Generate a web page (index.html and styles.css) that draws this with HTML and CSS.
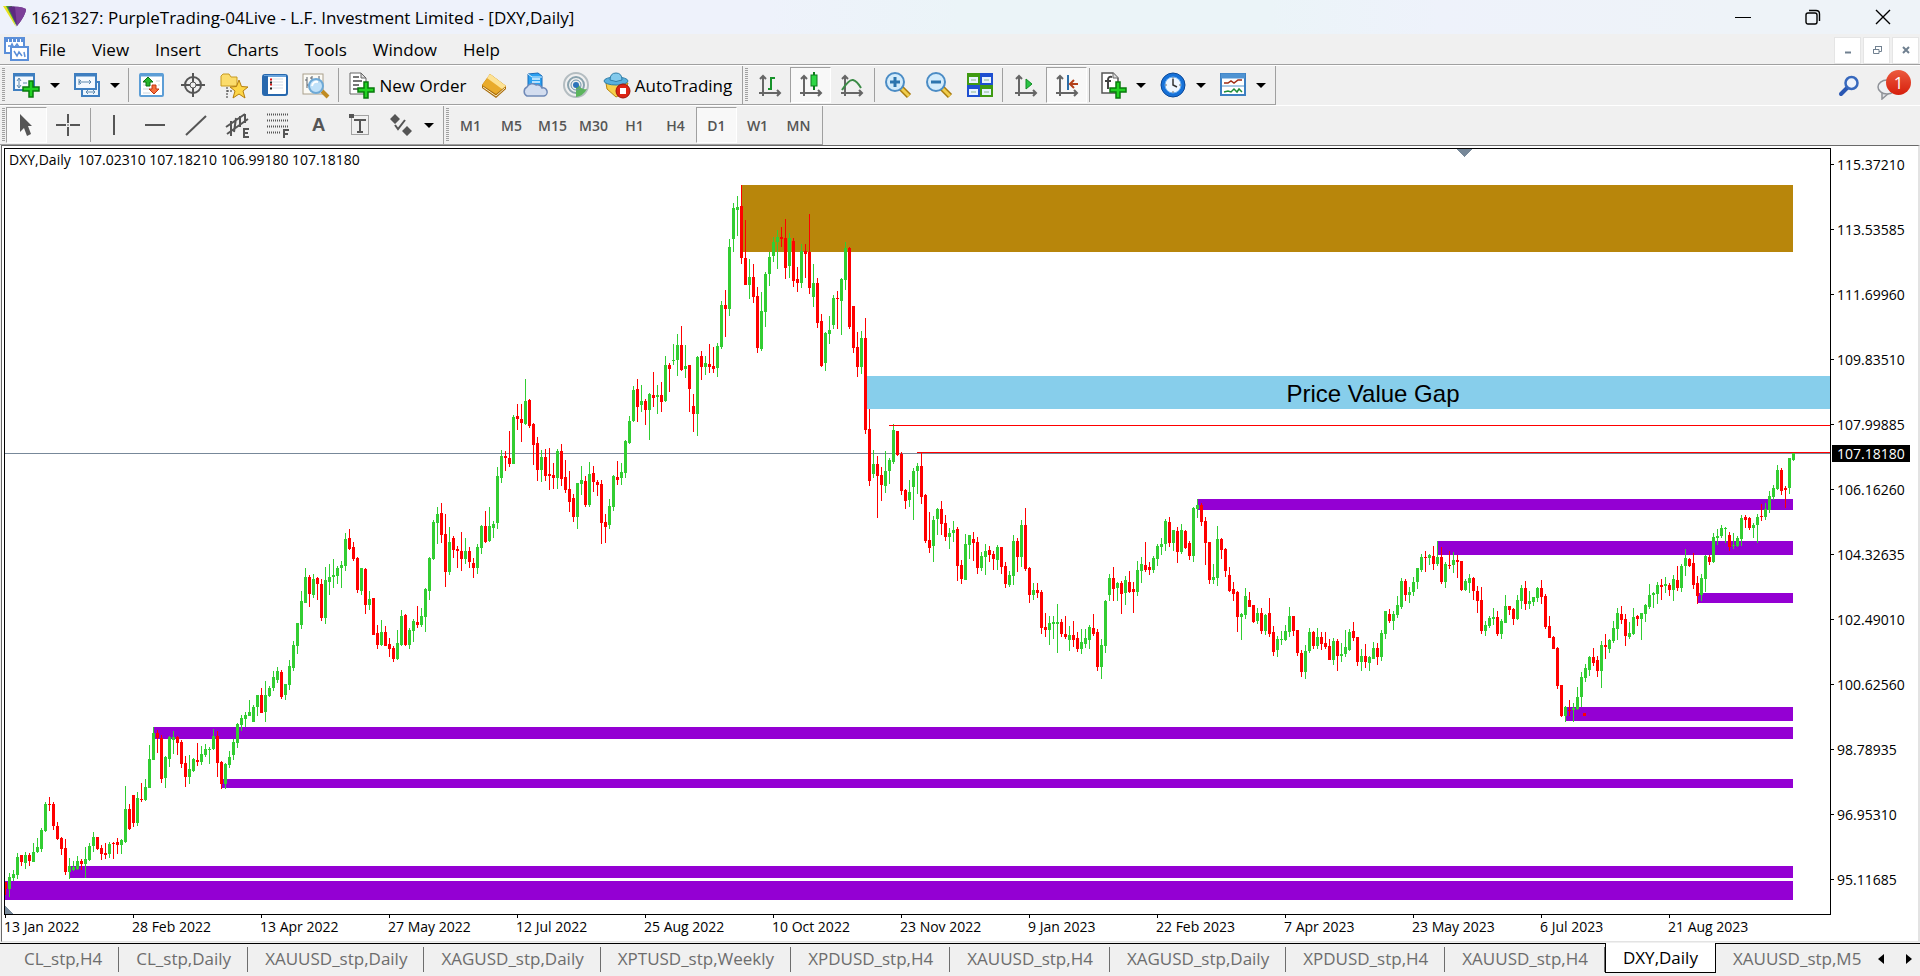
FILE: index.html
```
<!DOCTYPE html>
<html lang="en">
<head>
  <meta charset="utf-8">
  <title>1621327: PurpleTrading-04Live - L.F. Investment Limited - [DXY,Daily]</title>
  <link rel="stylesheet" href="styles.css">
</head>
<body>
  <header class="titlebar">
    <svg class="logo" width="24" height="22" viewBox="0 0 24 22">
      <path d="M0 0 6 0 13 21Z" fill="#e9e21c"/>
      <path d="M3 0H9L14 21Z" fill="#3f9b3d"/>
      <path d="M5 1Q12-1 23 3Q23 9 14 20Z" fill="#5d2a80"/>
      <path d="M12 1Q18 0 23 3Q23 9 14 20Z" fill="#7c3f98"/>
    </svg>
    <h1>1621327: PurpleTrading-04Live - L.F. Investment Limited - [DXY,Daily]</h1>
    <div class="window-buttons">
      <button aria-label="Minimize"><svg width="16" height="16"><path d="M0 8.5H16" stroke="#000"/></svg></button>
      <button aria-label="Restore"><svg width="16" height="16" fill="none" stroke="#000" stroke-width="1.4"><rect x="1" y="4" width="11" height="11" rx="2"/><path d="M4 1.500H11Q14.500 1.500 14.500 5V12"/></svg></button>
      <button aria-label="Close"><svg width="16" height="16"><path d="M1 1 15 15M15 1 1 15" stroke="#000" stroke-width="1.4"/></svg></button>
    </div>
  </header>

  <nav class="menubar">
    <svg class="doc-icon" width="26" height="26" viewBox="0 0 26 26">
      <path d="M1 2H20V17H1Z" fill="#fff" stroke="#5b8fd9" stroke-width="2"/>
      <path d="M1 4H20" stroke="#5b8fd9" stroke-width="4" stroke-dasharray="3 1"/>
      <path d="M4 10H7L8 8 10 12 13 8 15 11" fill="none" stroke="#5b8fd9" stroke-width="1.500"/>
      <path d="M7 11H24V24H7Z" fill="#fff" stroke="#5b8fd9" stroke-width="2"/>
      <path d="M10 15 13 20 15 16 18 20M20 16 21 21" fill="none" stroke="#5b8fd9" stroke-width="1.500"/>
    </svg>
    <button>File</button>
    <button>View</button>
    <button>Insert</button>
    <button>Charts</button>
    <button>Tools</button>
    <button>Window</button>
    <button>Help</button>
    <div class="mdi-buttons">
      <button aria-label="Minimize chart"><svg width="12" height="12"><path d="M3 8.500H9" stroke="#708090" stroke-width="2"/></svg></button>
      <button aria-label="Restore chart"><svg width="12" height="12" fill="none" stroke="#708090"><path d="M4.500 5V2.500H10.500V7.500H8M4 2.500H11" /><path d="M2 5.500H8V9.500H2.500V5"/></svg></button>
      <button aria-label="Close chart"><svg width="12" height="12"><path d="M3 3 9 9M9 3 3 9" stroke="#708090" stroke-width="2"/></svg></button>
    </div>
  </nav>

  <div class="toolbar">
    <div class="bar">
      <i class="grip"></i>
      <button class="tool drop" aria-label="New chart">
        <svg viewBox="0 0 28 28"><rect x="1" y="3" width="20" height="16" fill="#f4f9fe" stroke="#3f7fc0" stroke-width="2"/><path d="M1 4H21" stroke="#3f7fc0" stroke-width="3"/><path d="M6 8V16M4 10 6 7 8 10M4 14 6 17 8 14M10 12H14" stroke="#5d88ad" fill="none"/><path d="M16 10H20V16H26V20H20V26H16V20H10V16H16Z" fill="#22d322" stroke="#087a0d" stroke-width="1.500"/></svg>
      </button>
      <button class="tool drop" aria-label="Profiles">
        <svg viewBox="0 0 28 28"><rect x="9" y="11" width="17" height="14" fill="#eef6fd" stroke="#3f7fc0" stroke-width="2"/><path d="M13 21H22M15 19 13 21 15 23M20 19 22 21 20 23" stroke="#5d88ad" fill="none"/><rect x="2" y="3" width="21" height="15" fill="#f4f9fe" stroke="#3f7fc0" stroke-width="2"/><path d="M1 4H24" stroke="#3f7fc0" stroke-width="3"/><path d="M6 8V14M6 11H18M8 9 6 11 8 13M16 9 18 11 16 13" stroke="#5d88ad" fill="none"/></svg>
      </button>
      <i class="sep"></i>
      <button class="tool" aria-label="Market Watch">
        <svg viewBox="0 0 28 28"><rect x="2" y="3" width="23" height="22" rx="1" fill="#fff" stroke="#5d9ed6" stroke-width="2"/><path d="M2 4H25" stroke="#5d9ed6" stroke-width="3"/><path d="M5 10H8M5 14H8M5 18H12M18 10H22M20 14H22M5 22H12" stroke="#c9d5df"/><path d="M10 6 15 11H12V15H8V11H5Z" fill="#25b52b" stroke="#0b7010"/><path d="M16 23 11 18H14V14H18V18H21Z" fill="#f4703c" stroke="#c33410"/></svg>
      </button>
      <button class="tool" aria-label="Data Window">
        <svg viewBox="0 0 28 28" fill="none" stroke="#555"><circle cx="14" cy="14" r="8" stroke-width="2"/><circle cx="14" cy="14" r="3"/><path d="M14 2V11M14 17V26M2 14H11M17 14H26" stroke-width="2"/></svg>
      </button>
      <button class="tool" aria-label="Navigator">
        <svg viewBox="0 0 28 28"><path d="M1 15V5L3 3H9L11 6H17V15Z" fill="#fbdc6c" stroke="#c79a21"/><path d="M7 16V27M7 20H13" stroke="#333" stroke-dasharray="2 1"/><path d="M19 9 21.500 15.500 28 16 23 20 25 27 19 23 13 27 15 20 10 16 16.500 15.500Z" fill="#fdd648" stroke="#b57d0c"/></svg>
      </button>
      <button class="tool" aria-label="Terminal">
        <svg viewBox="0 0 28 28"><rect x="2" y="4" width="24" height="20" rx="2" fill="#fff" stroke="#2768ae" stroke-width="2"/><path d="M3 5H25" stroke="#6ba5dd" stroke-width="2"/><path d="M5 5V23" stroke="#2768ae" stroke-width="4"/><path d="M10 8H22M10 11H22M10 14H22M10 17H22" stroke="#d5dde6"/><path d="M9 8.500H11M9 13.500H11" stroke="#e01515" stroke-width="2"/><path d="M9 11.500H11M9 17.500H11" stroke="#222" stroke-width="2"/></svg>
      </button>
      <button class="tool" aria-label="Strategy Tester">
        <svg viewBox="0 0 28 28"><rect x="1" y="3" width="20" height="20" fill="#fbfaf5" stroke="#aaa08b"/><path d="M5 6V17M3 9H5M5 14H7M10 5V10M8 7H10M17 5V12M15 9H17" stroke="#58606a"/><path d="M20 20 26 26" stroke="#c08b22" stroke-width="4"/><circle cx="14" cy="15" r="7" fill="#b9defa" fill-opacity=".9" stroke="#6ea9d6" stroke-width="2"/><path d="M10 15Q11 10 16 11" stroke="#fff" fill="none" stroke-width="2"/></svg>
      </button>
      <i class="sep"></i>
      <button class="tool labelled" aria-label="New Order">
        <svg viewBox="0 0 28 28"><path d="M3 2H14L19 7V23H3Z" fill="#fff" stroke="#666"/><path d="M14 2V7H19Z" fill="#ddd" stroke="#666"/><path d="M6 6H12M6 10H15M6 14H12M6 18H11" stroke="#777" stroke-width="2"/><path d="M17 11H21V17H27V21H21V27H17V21H11V17H17Z" fill="#22d322" stroke="#087a0d" stroke-width="1.500"/></svg>
        <span>New Order</span>
      </button>
      <button class="tool" aria-label="MetaEditor">
        <svg viewBox="0 0 28 28"><path d="M10 3 26 15V18L16 27 2 17V14Z" fill="#a96c0b"/><path d="M10 3 26 15 16 23 2 14Z" fill="#e9ab2c"/><path d="M10 3 26 15 22 18 7 7Z" fill="#fde294"/><path d="M3 16 16 25 25 17" fill="none" stroke="#fbeec6"/></svg>
      </button>
      <button class="tool" aria-label="VPS">
        <svg viewBox="0 0 28 28"><path d="M7 3 17 2 21 5V16H7Z" fill="#2ba0f0" stroke="#1b6ab8"/><path d="M7 3 11 6H21" stroke="#d8f0ff" fill="none"/><path d="M11 8H19M11 11H19" stroke="#e5f5ff" stroke-width="1.500"/><path d="M6 25A5 5 0 0 1 6 16 6 6 0 0 1 15 14 5 5 0 0 1 21 17 4 4 0 0 1 23 25Z" fill="#d3ddef" stroke="#6f89b7" stroke-width="1.500"/></svg>
      </button>
      <button class="tool" aria-label="Signals">
        <svg viewBox="0 0 28 28" fill="none"><circle cx="14" cy="14" r="12" stroke="#b4bdc1" stroke-width="2"/><circle cx="14" cy="14" r="8" stroke="#8aa3ae" stroke-width="2"/><path d="M14 14V26Q21 25 25 18Q19 19 17 14Z" fill="#5cb45d"/><circle cx="14" cy="14" r="5" stroke="#6e93a8"/><circle cx="14" cy="14" r="3" fill="#2d73b9"/></svg>
      </button>
      <button class="tool labelled auto" aria-label="AutoTrading">
        <svg viewBox="0 0 28 28"><path d="M3 12H25L21 22 13 26 4 18Z" fill="#f6cf4a" stroke="#b68413"/><ellipse cx="13" cy="10" rx="12" ry="4" fill="#59b0dd" stroke="#2e7da8"/><path d="M7 9Q7 2 13 2T19 9Q13 12 7 9" fill="#83caec" stroke="#2e7da8"/><circle cx="20" cy="20" r="7" fill="#dc2414" stroke="#9d140a"/><rect x="17" y="17" width="6" height="6" fill="#fff"/></svg>
        <span>AutoTrading</span>
      </button>
    </div>
    <div class="bar">
      <i class="grip"></i>
      <button class="tool" aria-label="Bar Chart">
        <svg viewBox="0 0 28 28" fill="none" stroke="#666" stroke-width="2"><path d="M7 5V25M3 22H24M4 8 7 5 10 8M21 19 24 22 21 25"/><path d="M12 18H15V7H19" stroke="#16922a"/></svg>
      </button>
      <button class="tool pressed" aria-label="Candlesticks">
        <svg viewBox="0 0 28 28" fill="none" stroke="#666" stroke-width="2"><path d="M7 5V25M3 22H24M4 8 7 5 10 8M21 19 24 22 21 25"/><path d="M17 1V19" stroke="#0d7a1c"/><rect x="14" y="4" width="6" height="11" fill="#2fd645" stroke="#0d7a1c" stroke-width="1"/></svg>
      </button>
      <button class="tool" aria-label="Line Chart">
        <svg viewBox="0 0 28 28" fill="none" stroke="#666" stroke-width="2"><path d="M7 5V25M3 22H24M4 8 7 5 10 8M21 19 24 22 21 25"/><path d="M4 19Q11 8 15 9T23 17" stroke="#3b8b46"/></svg>
      </button>
      <i class="sep"></i>
      <button class="tool" aria-label="Zoom In">
        <svg viewBox="0 0 28 28"><path d="M17 17 25 25" stroke="#a97b0d" stroke-width="6"/><path d="M17 17 25 25" stroke="#f1cd4d" stroke-width="3"/><circle cx="11" cy="11" r="9" fill="#d4ecfb" stroke="#4b8cc5" stroke-width="2"/><path d="M6 11H16M11 6V16" stroke="#2d75ae" stroke-width="3"/></svg>
      </button>
      <button class="tool" aria-label="Zoom Out">
        <svg viewBox="0 0 28 28"><path d="M17 17 25 25" stroke="#a97b0d" stroke-width="6"/><path d="M17 17 25 25" stroke="#f1cd4d" stroke-width="3"/><circle cx="11" cy="11" r="9" fill="#d4ecfb" stroke="#4b8cc5" stroke-width="2"/><path d="M6 11H16" stroke="#2d75ae" stroke-width="3"/></svg>
      </button>
      <button class="tool" aria-label="Tile Windows">
        <svg viewBox="0 0 28 28"><path d="M1 2H14V14H1ZM14 14H27V26H14Z" fill="#3f9a12"/><path d="M14 2H27V14H14ZM1 14H14V26H1Z" fill="#1e4fd0"/><path d="M3 6H12V12H3ZM16 6H25V12H16ZM3 18H12V24H3ZM16 18H25V24H16Z" fill="#e8f3ff"/><path d="M5 9H10M18 9H23M5 21H10M18 21H23" stroke="#8fb48c"/></svg>
      </button>
      <i class="sep"></i>
      <button class="tool" aria-label="Auto Scroll">
        <svg viewBox="0 0 28 28" fill="none" stroke="#666" stroke-width="2"><path d="M7 5V25M3 22H24M4 8 7 5 10 8M21 19 24 22 21 25"/><path d="M14 8 20 13 14 18Z" fill="#29c444" stroke="#128a25" stroke-width="1"/></svg>
      </button>
      <button class="tool pressed" aria-label="Chart Shift">
        <svg viewBox="0 0 28 28" fill="none" stroke="#666" stroke-width="2"><path d="M7 5V25M3 22H24M4 8 7 5 10 8M21 19 24 22 21 25"/><path d="M15 4V19" stroke="#2c6ea8"/><path d="M25 13H18M21 9 17 13 21 17" stroke="#b3401a"/></svg>
      </button>
      <i class="sep"></i>
      <button class="tool drop" aria-label="Indicators">
        <svg viewBox="0 0 28 28"><path d="M3 2H14L19 7V22H3Z" fill="#fff" stroke="#555" stroke-width="1.500"/><path d="M14 2V7H19" fill="#ddd" stroke="#666"/><path d="M13 6Q9 5 9 9V18M6 10H12" stroke="#444" stroke-width="2" fill="none"/><path d="M17 11H21V17H27V21H21V27H17V21H11V17H17Z" fill="#22d322" stroke="#087a0d" stroke-width="1.500"/></svg>
      </button>
      <button class="tool drop" aria-label="Periods">
        <svg viewBox="0 0 28 28"><circle cx="14" cy="14" r="12" fill="#1671d8" stroke="#0b4796"/><circle cx="14" cy="14" r="8" fill="#eef6ff" stroke="#6bb0f2"/><path d="M14 8V14L18 16" stroke="#333" stroke-width="1.500" fill="none"/><path d="M14 6V8M14 20V22M6 14H8M20 14H22" stroke="#777"/></svg>
      </button>
      <button class="tool drop" aria-label="Templates">
        <svg viewBox="0 0 28 28"><rect x="2" y="3" width="24" height="21" fill="#fff" stroke="#3c7fc2" stroke-width="2"/><path d="M2 5H26" stroke="#4f93d2" stroke-width="5"/><path d="M3 15H25" stroke="#8fb9de" stroke-width="1.500"/><path d="M5 12H9L12 10 15 12 19 9H23" fill="none" stroke="#a02c15" stroke-width="1.500"/><path d="M5 21 9 20 12 21 15 18 18 21 20 18 23 21" fill="none" stroke="#1f8d38" stroke-width="1.500"/></svg>
      </button>
    </div>
    <div class="bar-right">
      <button aria-label="Search"><svg width="24" height="24" viewBox="0 0 24 24" fill="none"><path d="M10 14 4 20" stroke="#2a57b3" stroke-width="4" stroke-linecap="round"/><circle cx="14.500" cy="9" r="6" fill="#eef3fb" stroke="#3768bd" stroke-width="2.500"/></svg></button>
      <button class="notify" aria-label="Notifications"><svg width="28" height="28" viewBox="0 0 28 28"><path d="M7 20 7 27 14 21" fill="#e3e5e9" stroke="#8f9298" stroke-width="1.500"/><ellipse cx="12" cy="15" rx="9" ry="7" fill="#eef0f3" stroke="#8f9298" stroke-width="1.500"/></svg><span class="badge">1</span></button>
    </div>
  </div>

  <div class="toolbar">
    <div class="bar">
      <i class="grip"></i>
      <button class="tool pressed" aria-label="Cursor">
        <svg viewBox="0 0 28 28"><path d="M7 3V21L11 17 14 25 18 23 15 15H19Z" fill="#555"/></svg>
      </button>
      <button class="tool" aria-label="Crosshair">
        <svg viewBox="0 0 28 28" stroke="#555" stroke-width="2"><path d="M14 3V12M14 16V25M2 14H12M16 14H26M13.500 14H14.500"/></svg>
      </button>
      <i class="sep"></i>
      <button class="tool" aria-label="Vertical Line"><svg viewBox="0 0 28 28" stroke="#555" stroke-width="2"><path d="M14 4V24"/></svg></button>
      <button class="tool" aria-label="Horizontal Line"><svg viewBox="0 0 28 28" stroke="#555" stroke-width="2"><path d="M4 14H24"/></svg></button>
      <button class="tool" aria-label="Trendline"><svg viewBox="0 0 28 28" stroke="#555" stroke-width="2"><path d="M4 24 24 5"/></svg></button>
      <button class="tool" aria-label="Equidistant Channel">
        <svg viewBox="0 0 28 28" stroke="#555" stroke-width="2" fill="none"><path d="M3 16 22 3M4 23 25 8M8 10V25M13 7 11 21M17 5V16M22 3V12"/><path d="M26 18H21V26H26M21 22H25"/></svg>
      </button>
      <button class="tool" aria-label="Fibonacci Retracement">
        <svg viewBox="0 0 28 28" stroke="#555" stroke-width="2" fill="none"><path d="M3 3.500H24M3 9.500H24M3 15.500H24M3 21.500H17" stroke-dasharray="1 1"/><path d="M20 27V19H25M20 23H24"/></svg>
      </button>
      <button class="tool glyph" aria-label="Text">A</button>
      <button class="tool" aria-label="Text Label">
        <svg viewBox="0 0 28 28" stroke="#555" stroke-width="2" fill="none"><path d="M5.500 4.500H22.500V23.500H5.500Z" stroke-dasharray="1 1" stroke-width="1"/><path d="M9 10V9H19V10M14 9V21M11 21H17"/><path d="M4 4H7V6H4Z"/></svg>
      </button>
      <button class="tool drop" aria-label="Arrows">
        <svg viewBox="0 0 28 28" fill="#555"><path d="M8 3 13 8 8 13 3 8ZM20 15 25 20 20 25 15 20Z"/><path d="M8 14 11 18 18 9" fill="none" stroke="#555" stroke-width="2"/></svg>
      </button>
    </div>
    <div class="bar">
      <i class="grip"></i>
      <button class="tool">M1</button>
      <button class="tool">M5</button>
      <button class="tool">M15</button>
      <button class="tool">M30</button>
      <button class="tool">H1</button>
      <button class="tool">H4</button>
      <button class="tool pressed">D1</button>
      <button class="tool">W1</button>
      <button class="tool">MN</button>
    </div>
  </div>

  <main class="workspace">
    <div class="plot">
      <svg id="chart" shape-rendering="crispEdges" role="img" aria-label="DXY daily candles"></svg>
      <p class="quote">DXY,Daily&nbsp; 107.02310 107.18210 106.99180 107.18180</p>
    </div>
    <div class="price-axis">
      <ul>
        <li>115.37210</li>
        <li>113.53585</li>
        <li>111.69960</li>
        <li>109.83510</li>
        <li>107.99885</li>
        <li>106.16260</li>
        <li>104.32635</li>
        <li>102.49010</li>
        <li>100.62560</li>
        <li>98.78935</li>
        <li>96.95310</li>
        <li>95.11685</li>
      </ul>
      <span class="last-price">107.18180</span>
    </div>
    <ul class="time-axis">
      <li>13 Jan 2022</li>
      <li>28 Feb 2022</li>
      <li>13 Apr 2022</li>
      <li>27 May 2022</li>
      <li>12 Jul 2022</li>
      <li>25 Aug 2022</li>
      <li>10 Oct 2022</li>
      <li>23 Nov 2022</li>
      <li>9 Jan 2023</li>
      <li>22 Feb 2023</li>
      <li>7 Apr 2023</li>
      <li>23 May 2023</li>
      <li>6 Jul 2023</li>
      <li>21 Aug 2023</li>
    </ul>
  </main>

  <footer class="tabs">
    <button>CL_stp,H4</button>
    <button>CL_stp,Daily</button>
    <button>XAUUSD_stp,Daily</button>
    <button>XAGUSD_stp,Daily</button>
    <button>XPTUSD_stp,Weekly</button>
    <button>XPDUSD_stp,H4</button>
    <button>XAUUSD_stp,H4</button>
    <button>XAGUSD_stp,Daily</button>
    <button>XPDUSD_stp,H4</button>
    <button>XAUUSD_stp,H4</button>
    <button class="active">DXY,Daily</button>
    <button class="last">XAUUSD_stp,M5</button>
    <div class="scroll">
      <button aria-label="Scroll left"><svg width="6" height="10"><path d="M6 0V10L0 5Z"/></svg></button>
      <button aria-label="Scroll right"><svg width="6" height="10"><path d="M0 0V10L6 5Z"/></svg></button>
    </div>
  </footer>
  <script src="chart.js"></script>
</body>
</html>
```
FILE: styles.css
```
* {
  box-sizing: border-box;
}

body {
  margin: 0;
  min-height: 100vh;
  display: flex;
  flex-direction: column;
  background: #f0f0f0;
  color: #000;
  font: 17px "Open Sans", "Noto Sans", sans-serif;
}

button {
  margin: 0;
  padding: 0;
  border: 0;
  background: none;
  color: inherit;
  font: inherit;
}

svg {
  display: block;
}

ul {
  list-style: none;
  margin: 0;
  padding: 0;
}

/* title bar and menu */

.titlebar {
  display: flex;
  align-items: center;
  height: 34px;
  background: linear-gradient(90deg, #eef2fb, #eef2fb 40%, #ebf4f8 50%, #ebf4f8 66%, #eef2fb 75%, #eef3f8 90%);
}

.logo {
  margin: 0 4px 0 3px;
}

.titlebar h1 {
  margin: 0;
  font-size: 17px;
  font-weight: 400;
}

.window-buttons {
  display: flex;
  margin: 0 2px 0 auto;
}

.window-buttons button {
  display: flex;
  align-items: center;
  justify-content: center;
  width: 70px;
  height: 34px;
}

.menubar {
  display: flex;
  align-items: center;
  height: 31px;
  padding-left: 4px;
  border-bottom: 1px solid #a0a0a0;
}

.menubar > button {
  padding: 0 13px;
}

.doc-icon {
  margin-right: -4px;
}

.mdi-buttons {
  display: flex;
  gap: 2px;
  margin: 2px 1px 0 auto;
}

.mdi-buttons button {
  display: flex;
  align-items: center;
  justify-content: center;
  width: 27px;
  height: 27px;
  background: #fff;
  border: 1px solid #e5e5e5;
}

/* toolbars */

.toolbar {
  display: flex;
  height: 40px;
  border-top: 1px solid #fff;
}

.bar {
  display: flex;
  align-items: center;
  padding: 0 3px 0 2px;
  border-right: 1px solid #a0a0a0;
  border-bottom: 1px solid #a0a0a0;
}

.grip {
  width: 3px;
  height: 34px;
  margin-right: 1px;
  background: repeating-linear-gradient(#a0a0a0 0 1px, #f0f0f0 1px 2px);
}

.sep {
  width: 1px;
  height: 34px;
  margin: 0 2px;
  background: #a0a0a0;
}

.tool {
  display: flex;
  align-items: center;
  justify-content: center;
  width: 41px;
  height: 36px;
  color: #555;
  font-size: 14px;
  font-weight: 600;
}

.tool svg {
  flex: none;
  width: 28px;
  height: 28px;
}

.tool.glyph {
  font: 700 19px "Liberation Sans", sans-serif;
}

.drop {
  width: 60px;
  gap: 9px;
}

.drop::after {
  content: "";
  border: 5px solid transparent;
  border-top-color: #000;
  border-bottom-width: 0;
}

.labelled {
  width: 132px;
  gap: 4px;
  color: #000;
  font-size: 17px;
  font-weight: 400;
}

.auto {
  width: 143px;
}

.pressed {
  border: 1px solid #a0a0a0;
  border-right-color: #fff;
  border-bottom-color: #fff;
  background: #f8f8f8;
}

.bar-right {
  display: flex;
  align-items: center;
  gap: 14px;
  margin: 0 9px 0 auto;
}

.notify {
  position: relative;
  width: 36px;
}

.badge {
  position: absolute;
  top: -2px;
  right: 0;
  width: 25px;
  height: 25px;
  border-radius: 50%;
  background: linear-gradient(#ec5a3e, #d61f0c);
  color: #fff;
  font-size: 17px;
  line-height: 25px;
}

/* chart */

.workspace {
  flex: 1;
  display: grid;
  grid-template-columns: 1fr 87px;
  grid-template-rows: 1fr 26px;
  margin-left: 1px;
  padding: 2px 0 0 2px;
  border: 1px solid #696969;
  border-right: 2px solid #e3e3e3;
  border-bottom-color: #e3e3e3;
  background: #fff;
  font-size: 14px;
}

.plot {
  position: relative;
  border: 1px solid #000;
}

#chart {
  position: absolute;
  width: 100%;
  height: 100%;
}

#chart text {
  font: 24px "Liberation Sans", sans-serif;
}

.quote {
  position: absolute;
  top: 1px;
  left: 4px;
  margin: 0;
}

.price-axis {
  position: relative;
}

.price-axis li {
  display: flex;
  height: 65px;
  line-height: 34px;
}

.price-axis li:last-child {
  height: 34px;
}

.price-axis li::before {
  content: "";
  width: 3px;
  height: 1px;
  margin: 16px 3px 0 0;
  background: #000;
}

.last-price {
  position: absolute;
  top: 297px;
  left: 1px;
  width: 78px;
  padding-left: 5px;
  background: #000;
  color: #fff;
  line-height: 17px;
}

.time-axis {
  display: flex;
  overflow: hidden;
}

.time-axis li {
  flex: none;
  width: 128px;
  line-height: 18px;
}

.time-axis li::before {
  content: "";
  display: block;
  width: 1px;
  height: 3px;
  margin-left: 1px;
  background: #000;
}

/* chart tabs */

.tabs {
  display: flex;
  height: 33px;
  margin-top: 1px;
  padding: 0 6px 3px 7px;
  border-top: 1px solid #000;
  color: #6d6d6d;
}

.tabs > button {
  position: relative;
  padding: 0 17px;
  white-space: nowrap;
}

.tabs > button::after {
  content: "";
  position: absolute;
  top: 3px;
  right: 0;
  bottom: 1px;
  width: 1px;
  background: #6d6d6d;
}

.tabs .active {
  margin-top: -1px;
  border: 1px solid #000;
  border-top: 0;
  background: #fff;
  color: #000;
}

.tabs .active::after,
.tabs .last::after {
  display: none;
}

.scroll {
  display: flex;
  gap: 22px;
  margin: 0 4px 0 auto;
}
```
FILE: chart.js
```
// Candles, oldest first: direction (g up, r down), then high, body top, body bottom, low
// as distances from the top of the plot.
var candles = (
  'r733,733,740,746 g724,728,740,748 g721,725,729,732 g704,708,726,730 r706,706,713,717 g703,706,714,720 r704,706,712,717 g694,703,713,713 ' +
  'g689,698,703,704 g679,681,700,703 g653,655,682,683 r648,655,656,662 r653,655,677,681 r673,677,690,691 r688,689,700,706 r690,699,723,726 ' +
  'g709,717,723,730 g712,718,721,722 g707,712,720,721 r710,712,715,721 g698,710,715,729 g694,697,711,712 g683,688,697,703 r688,688,700,701 ' +
  'r696,699,705,711 r694,704,706,710 g693,695,705,709 r693,694,695,710 r689,693,696,705 g690,691,696,705 g637,660,693,694 r655,660,680,681 ' +
  'r646,646,674,678 g643,649,674,677 r634,650,651,653 g630,638,651,652 g596,610,639,639 g578,584,611,611 r581,584,589,604 r586,589,630,634 ' +
  'g607,608,629,639 g587,588,610,618 g582,588,591,605 r587,588,594,606 r591,593,615,619 r607,614,628,638 g606,620,628,635 g609,610,622,623 ' +
  'r594,611,613,617 g597,605,613,616 g595,600,606,608 g598,600,601,615 g580,587,600,601 r582,587,614,628 r612,613,635,640 g614,615,635,640 ' +
  'g602,608,616,619 g590,593,606,611 g574,575,594,599 g566,569,576,582 g563,566,570,578 g551,563,567,567 g556,558,573,573 g546,546,558,567 ' +
  'r539,546,564,564 g532,546,563,573 g537,539,547,548 g522,528,539,542 g518,522,531,534 r521,523,548,550 g535,535,546,551 g511,517,536,541 ' +
  'g492,496,519,522 g474,474,497,505 g442,452,476,480 g419,428,454,454 r426,428,445,458 g425,430,446,449 r428,429,435,451 r430,435,469,472 ' +
  'g418,431,469,475 g415,428,433,446 g410,426,428,439 g417,419,427,435 g412,416,419,439 g384,390,417,422 r380,389,400,401 r393,398,410,412 ' +
  'r408,409,441,444 g419,419,442,446 r419,420,456,465 g442,450,456,461 r449,449,486,486 r476,484,496,500 g471,483,496,497 r477,483,497,497 ' +
  'r489,495,500,508 r497,499,510,513 g481,494,510,511 g461,467,496,497 r465,466,496,497 g479,481,496,500 g470,472,482,493 r457,473,476,479 ' +
  'g459,467,476,478 g439,440,468,483 g408,409,442,451 g371,373,410,411 g358,365,374,395 r354,364,386,394 r365,385,423,438 g378,393,423,426 ' +
  'r387,389,401,409 r397,400,402,419 r383,402,410,422 g389,402,410,415 r398,402,413,419 r409,414,419,429 g395,398,419,425 g376,377,399,405 ' +
  'r362,377,393,394 g358,377,392,393 g372,375,379,389 g318,327,374,380 g301,307,329,334 r302,307,309,322 r282,309,315,318 g266,268,315,315 ' +
  'r255,267,270,281 r255,270,274,293 g230,252,275,276 r250,251,277,279 r274,275,296,316 r288,294,321,332 g301,308,321,333 r300,308,327,332 ' +
  'r299,325,327,341 r314,326,329,340 g300,302,329,340 r295,302,330,337 r311,328,341,344 r322,340,353,363 r345,349,368,373 g334,334,368,380 ' +
  'g317,331,335,346 r327,332,356,358 g313,325,356,358 r317,324,333,343 r331,333,336,347 r331,335,374,395 r365,373,378,394 g350,357,376,380 ' +
  'g326,327,358,362 r312,328,331,336 g314,323,329,336 g291,292,324,329 g267,272,294,295 g237,241,272,273 r230,240,258,273 g236,252,256,263 ' +
  'r250,252,261,276 g244,245,261,291 r223,246,249,258 g236,246,248,265 r233,246,253,263 g207,216,252,253 r214,216,220,243 g195,211,212,216 ' +
  'g185,196,211,227 r177,196,221,222 g196,217,220,229 r216,216,240,263 r245,257,265,283 g207,208,265,287 r202,207,218,231 g207,214,218,226 ' +
  'r195,215,218,224 r198,217,220,224 g194,197,219,228 g152,156,198,200 r141,156,160,188 g90,98,160,167 g54,59,90,103 g47,58,61,87 ' +
  'r36,57,109,115 r71,109,136,136 g110,128,136,150 r115,128,148,154 r138,147,199,204 g143,162,200,202 g123,125,163,178 g103,108,125,137 ' +
  'g88,93,107,113 g81,88,93,120 r78,88,90,98 r70,89,119,130 g84,89,117,129 r89,92,132,138 r118,130,134,143 g95,102,134,139 ' +
  'r95,102,105,129 r65,103,139,145 g115,134,148,158 r129,134,174,179 r165,172,217,218 g183,184,214,222 g167,181,185,195 g146,149,176,180 ' +
  'r142,149,150,180 g129,130,152,186 g93,99,131,141 r98,99,178,180 r157,157,199,204 r183,198,218,228 g182,189,218,225 r169,189,281,285 ' +
  'r260,280,332,337 g301,315,325,329 r307,315,327,369 r318,326,336,352 g302,322,337,344 g309,311,322,335 g275,281,313,315 r282,282,306,307 ' +
  'r303,305,342,346 r340,341,352,360 g331,343,351,358 g319,322,338,371 g314,317,322,345 r303,317,348,355 r345,346,392,394 r363,391,399,404 ' +
  'g367,371,397,413 g359,360,370,386 r352,360,375,386 r366,374,388,392 g379,384,388,400 g372,381,384,393 r378,380,417,432 r411,416,430,435 ' +
  'g385,395,431,431 g386,386,396,410 r383,390,394,412 r388,393,419,425 g403,407,419,422 g395,402,408,426 r397,401,406,413 r402,405,410,421 ' +
  'g396,398,411,421 r398,398,418,425 r413,417,435,439 g422,426,436,438 g386,392,427,436 r389,392,408,423 g371,376,408,418 r359,376,420,422 ' +
  'r418,419,446,454 g434,441,446,451 r434,441,444,449 r441,443,479,485 r464,478,481,488 g467,474,481,496 g467,473,475,490 g455,473,475,504 ' +
  'r470,473,485,488 r467,485,488,490 g477,486,491,502 r472,486,491,498 r483,489,500,503 g480,493,500,505 g480,489,495,499 g476,478,491,500 ' +
  'r465,479,485,487 r480,483,518,522 g490,496,518,530 g451,452,497,504 g425,429,446,452 r418,429,440,452 g433,434,439,452 r432,434,445,465 ' +
  'g427,431,444,456 r422,433,443,444 r433,440,443,464 g412,421,443,447 g408,415,422,434 r393,416,421,423 r413,418,421,426 g407,409,421,424 ' +
  'g395,397,410,417 g389,395,398,406 g370,372,395,402 r368,373,394,398 g381,381,394,402 r378,382,403,414 g375,381,403,405 r381,382,399,400 ' +
  'r392,394,407,411 g358,359,407,413 g350,356,360,369 r354,356,373,377 r368,372,394,416 r393,393,431,435 g415,428,431,435 g377,390,429,437 ' +
  'r389,390,401,410 r399,400,422,428 r418,426,442,443 r433,440,445,452 r442,443,468,483 g464,465,468,491 g439,447,466,470 r443,451,458,458 ' +
  'r456,456,473,474 g459,464,472,475 r459,464,482,485 g465,466,482,486 r449,464,485,488 r477,483,503,507 g487,490,501,508 g482,490,491,496 ' +
  'g476,482,491,492 g458,467,483,488 r467,467,482,487 r481,481,504,507 r501,504,523,528 g496,502,523,530 g479,483,502,504 r482,483,497,500 ' +
  'g479,488,497,500 r483,488,495,501 r483,494,498,500 r490,497,511,511 g489,492,511,516 r490,492,507,522 g494,505,507,513 g481,498,505,508 ' +
  'g480,483,501,502 r473,482,489,492 r488,488,513,517 g500,507,513,522 r495,507,513,519 g507,508,514,522 g493,499,510,510 r494,499,508,516 ' +
  'g481,484,508,512 g462,462,485,490 r460,465,472,474 g462,465,472,481 g447,456,466,469 g429,432,458,460 r430,432,446,452 g438,443,446,454 ' +
  'g428,433,443,447 g419,419,433,440 g405,408,421,423 r402,408,409,423 g405,406,409,416 r397,407,415,421 g392,408,415,417 r398,408,433,435 ' +
  'g413,415,433,439 r402,416,417,420 g403,411,416,424 r406,411,413,429 r412,412,441,442 g430,432,441,442 g425,429,434,444 r428,429,442,451 ' +
  'r437,442,452,464 r438,451,482,485 g472,476,482,487 g467,469,477,479 g459,468,470,476 r462,468,485,487 g470,472,485,490 g446,457,474,474 ' +
  'r457,457,461,466 r459,460,470,476 g446,451,470,471 g436,439,452,460 r432,439,455,461 g442,452,455,460 g448,448,453,457 g438,439,449,453 ' +
  'r431,439,448,455 r445,447,478,480 r467,477,489,489 r487,488,500,500 r498,499,537,540 r536,536,567,568 g557,558,567,573 r551,561,562,567 ' +
  'g554,559,561,573 g538,548,560,561 g523,528,548,558 g515,519,529,533 g507,508,521,527 r499,508,514,517 r507,511,522,528 g492,496,522,539 ' +
  'r485,496,498,510 g490,491,500,504 g472,479,492,494 g459,464,480,491 r457,465,471,475 r465,470,487,497 g473,484,488,490 g459,468,485,486 ' +
  'r466,467,470,477 g464,464,470,491 g455,456,465,473 g435,446,458,460 g443,444,446,459 g433,436,445,455 r430,436,438,451 g428,435,437,444 ' +
  'r434,436,441,447 g426,430,441,452 r417,431,439,442 g415,417,439,443 g400,409,417,427 r409,410,417,418 r404,414,436,440 r427,434,447,455 ' +
  'g425,429,446,452 g406,407,430,443 r406,408,413,416 g384,388,413,414 g380,387,389,396 g376,379,387,389 g378,379,380,394 r383,386,398,402 ' +
  'g384,396,397,400 g387,389,397,398 g366,369,390,397 r366,368,371,379 r368,369,379,381 g374,376,379,389 g365,368,376,394 r355,367,368,372 ' +
  'g354,360,368,371 g342,347,361,364 g336,339,348,351 g316,321,340,341 r319,321,342,346 r337,339,341,359 g309,309,339,345 g304,304,311,312'
).split(' ');

var STEP = 4;
var LAST_X = (candles.length - 1) * STEP;

// left, top, bottom, colour
var zones = [
  [737, 36, 103, '#b8860b'],
  [1193, 350, 361, '#9400d3'],
  [1433, 392, 406, '#9400d3'],
  [1693, 444, 454, '#9400d3'],
  [1561, 558, 572, '#9400d3'],
  [149, 578, 590, '#9400d3'],
  [217, 630, 639, '#9400d3'],
  [65, 717, 729, '#9400d3'],
  [0, 732, 751, '#9400d3']
];

var svg = document.getElementById('chart');

function add (name, attrs) {
  var el = document.createElementNS('http://www.w3.org/2000/svg', name);
  for (var key in attrs) {
    el.setAttribute(key, attrs[key]);
  }
  svg.appendChild(el);
  return el;
}

function drawLevel (x, y, color) {
  add('line', {x1: x, x2: '100%', y1: y + 0.5, y2: y + 0.5, stroke: color});
}

zones.forEach(function (z) {
  add('rect', {x: z[0], y: z[1], width: LAST_X - z[0], height: z[2] - z[1], fill: z[3]});
});

// the gap stays open up to the right edge
add('rect', {x: 862, y: 227, width: '100%', height: 33, fill: '#87ceeb'});
add('text', {x: 1368, y: 253, 'text-anchor': 'middle'}).textContent = 'Price Value Gap';

drawLevel(0, 304, '#778899');

candles.forEach(function (c, i) {
  var v = c.slice(1).split(',').map(Number);
  var x = i * STEP;
  var d = 'M' + x + ' ' + v[0] + 'h1V' + v[3] + 'h-1Z' +
    'M' + (x - 1) + ' ' + v[1] + 'h3V' + v[2] + 'h-3Z';
  add('path', {d: d, fill: c[0] === 'g' ? '#32cd32' : '#f00'});
});

drawLevel(884, 276, '#f00');
drawLevel(912, 303, '#f00');
add('rect', {x: 1578, y: 564, width: 3, height: 3, fill: '#f00'});

// shift marker and scroll corner
add('path', {d: 'M1451 0H1467L1459 8Z', fill: '#778899'});
add('path', {d: 'M0 757L8 765H0Z', fill: '#778899'});
```
